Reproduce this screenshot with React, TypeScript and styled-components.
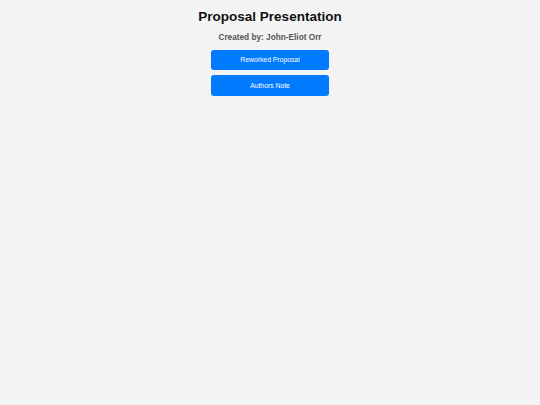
import styled, { createGlobalStyle } from "styled-components";

const GlobalStyle = createGlobalStyle`
  html, body {
    margin: 0;
    padding: 0;
    background: #f4f4f4;
    font-family: "Liberation Sans", Arial, sans-serif;
  }
  #root {
    min-height: 100vh;
  }
`;

const Page = styled.div`
  display: flex;
  flex-direction: column;
  align-items: center;
  padding-top: 9px;
  min-height: 100vh;
  box-sizing: border-box;
  background: #f4f4f4;
`;

const Title = styled.h1`
  margin: 0;
  font-size: 13.5px;
  font-weight: 700;
  color: #111;
`;

const Author = styled.p`
  margin: 9px 0 0;
  font-size: 8.25px;
  font-weight: 700;
  color: #555;
`;

const Actions = styled.div`
  display: flex;
  flex-direction: column;
  row-gap: 5px;
  margin-top: 7.5px;
  width: 118px;
`;

const Button = styled.button`
  height: 20.5px;
  border: none;
  outline: none;
  border-radius: 3px;
  background-color: #007bff;
  color: #fff;
  font-family: "Liberation Sans", Arial, sans-serif;
  font-size: 6.8px;
  padding: 0;
  cursor: pointer;
`;

const App = () => {
  const links = ["Reworked Proposal", "Authors Note"];

  return (
    <>
      <GlobalStyle />
      <Page>
        <Title>Proposal Presentation</Title>
        <Author>Created by: John-Eliot Orr</Author>
        <Actions>
          {links.map((label) => (
            <Button key={label}>{label}</Button>
          ))}
        </Actions>
      </Page>
    </>
  );
};

export default App;
